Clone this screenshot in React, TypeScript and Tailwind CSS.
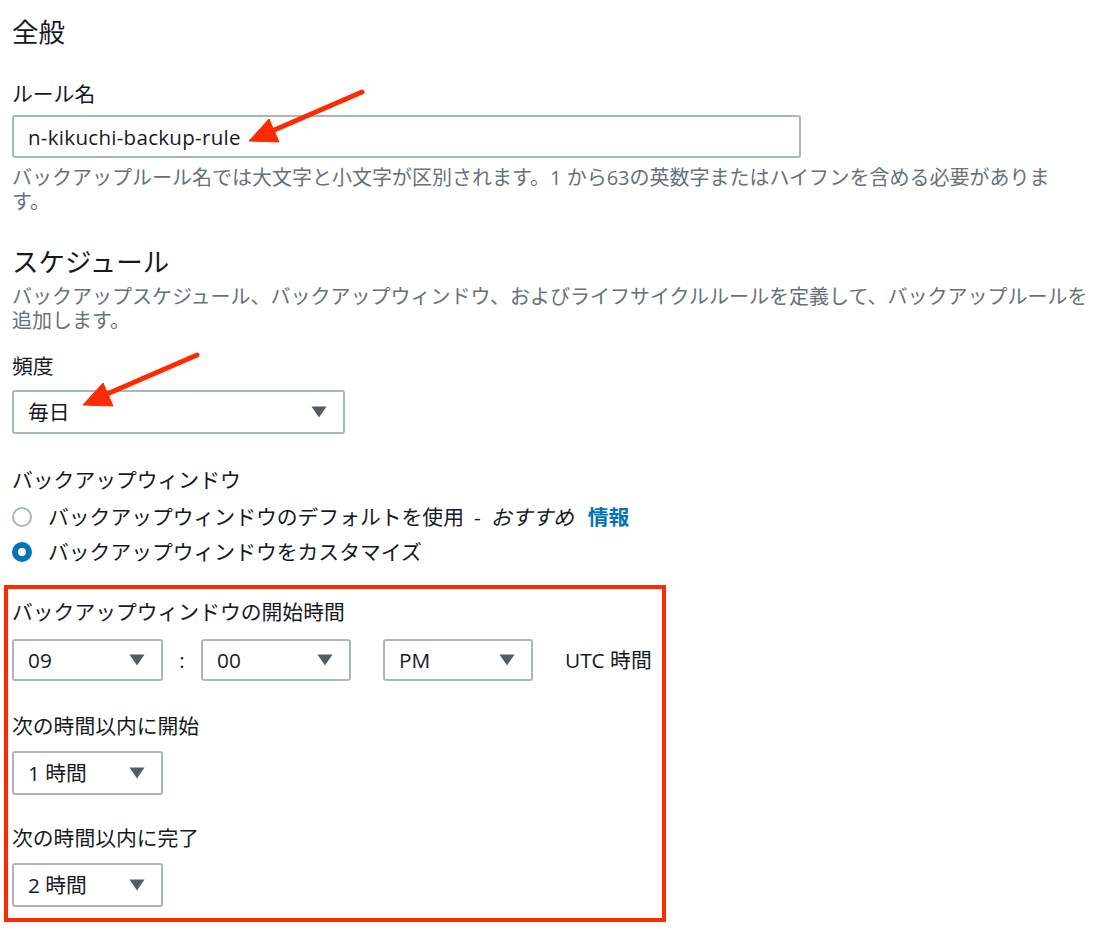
const font = { fontFamily: '"Open Sans", "Noto Sans CJK JP", sans-serif' };

function Caret() {
  return (
    <svg width="16" height="12" viewBox="0 0 16 12" className="shrink-0">
      <path d="M0.5 0.5 L15.5 0.5 L8 11.5 Z" fill="#545b64" />
    </svg>
  );
}

function Select({ value, className }: { value: string; className: string }) {
  return (
    <div
      className={`flex items-center justify-between border-2 border-[#aab7b8] rounded-[3px] pl-[14px] pr-4 bg-white ${className}`}
    >
      <span className="text-[20.8px] leading-6 text-[#16191f]">{value}</span>
      <Caret />
    </div>
  );
}

function Radio({ checked, children }: { checked?: boolean; children: React.ReactNode }) {
  return (
    <div className="flex items-center gap-4 h-6 text-[20.8px] leading-6 text-[#16191f]">
      {checked ? (
        <span className="w-[20px] h-[20px] rounded-full border-[6.5px] border-[#0073bb] bg-white shrink-0" />
      ) : (
        <span className="w-[20px] h-[20px] rounded-full border-2 border-[#aab7b8] bg-white shrink-0" />
      )}
      <span>{children}</span>
    </div>
  );
}

function Arrows() {
  return (
    <svg
      className="absolute left-0 top-0 pointer-events-none"
      width="1096"
      height="930"
      viewBox="0 0 1096 930"
    >
      <g fill="#ff2a00" stroke="#ff2a00">
        <line x1="362" y1="92" x2="272" y2="131" strokeWidth="5" strokeLinecap="round" />
        <polygon points="249,141 279,142 269,119" strokeWidth="1" strokeLinejoin="round" />
        <line x1="197" y1="355" x2="107" y2="394" strokeWidth="5" strokeLinecap="round" />
        <polygon points="83,405 113,406 103,383" strokeWidth="1" strokeLinejoin="round" />
      </g>
    </svg>
  );
}

export default function App() {
  return (
    <div className="relative w-[1096px] h-[930px] bg-white overflow-hidden" style={font}>
      <div className="pl-3 pr-[6px] pt-4 text-[#16191f]">
        <h2 className="text-[26.5px] leading-8 font-normal">全般</h2>

        <div className="mt-[34px] text-[20.8px] leading-6">ルール名</div>
        <div className="mt-[9px] w-[789px] h-[43px] flex items-center border-2 border-[#aab7b8] rounded-[3px] pl-[14px]">
          <span className="text-[20.5px] leading-6 tracking-[0.3px]">n-kikuchi-backup-rule</span>
        </div>
        <p className="mt-2 max-w-[1050px] text-[20px] leading-6 text-[#687078]">
          バックアップルール名では大文字と小文字が区別されます。1 から63の英数字またはハイフンを含める必要があります。
        </p>

        <h2 className="mt-8 text-[26.5px] leading-8 font-normal">スケジュール</h2>
        <p className="mt-[7px] text-[20px] leading-6 text-[#687078]">
          バックアップスケジュール、バックアップウィンドウ、およびライフサイクルルールを定義して、バックアップルールを追加します。
        </p>

        <div className="mt-[21px] text-[20.8px] leading-6">頻度</div>
        <Select value="毎日" className="mt-3 w-[333px] h-[44px]" />

        <div className="mt-[34px] text-[20.8px] leading-6">バックアップウィンドウ</div>
        <div className="mt-[13px] flex flex-col gap-[11px]">
          <Radio>
            バックアップウィンドウのデフォルトを使用<span className="mx-[10px]">-</span>
            <i>おすすめ</i>
            <span className="ml-[14px] font-bold text-[#0073bb]">情報</span>
          </Radio>
          <Radio checked>バックアップウィンドウをカスタマイズ</Radio>
        </div>

        <div className="mt-[21px] -ml-2 w-[662px] border-4 border-[#ff2a00] pl-1 pt-[11px] pb-[11px]">
          <div className="text-[20.8px] leading-6">バックアップウィンドウの開始時間</div>
          <div className="mt-[15px] flex items-center">
            <Select value="09" className="w-[151px] h-[42px]" />
            <span className="w-[38px] text-center text-[20.8px] leading-6">:</span>
            <Select value="00" className="w-[150px] h-[42px]" />
            <Select value="PM" className="ml-8 w-[150px] h-[42px]" />
            <span className="ml-8 text-[20.8px] leading-6">UTC 時間</span>
          </div>

          <div className="mt-[33px] text-[20.8px] leading-6">次の時間以内に開始</div>
          <Select value="1 時間" className="mt-[13px] w-[151px] h-[44px]" />

          <div className="mt-[31px] text-[20.8px] leading-6">次の時間以内に完了</div>
          <Select value="2 時間" className="mt-[13px] w-[151px] h-[44px]" />
        </div>
      </div>
      <Arrows />
    </div>
  );
}
